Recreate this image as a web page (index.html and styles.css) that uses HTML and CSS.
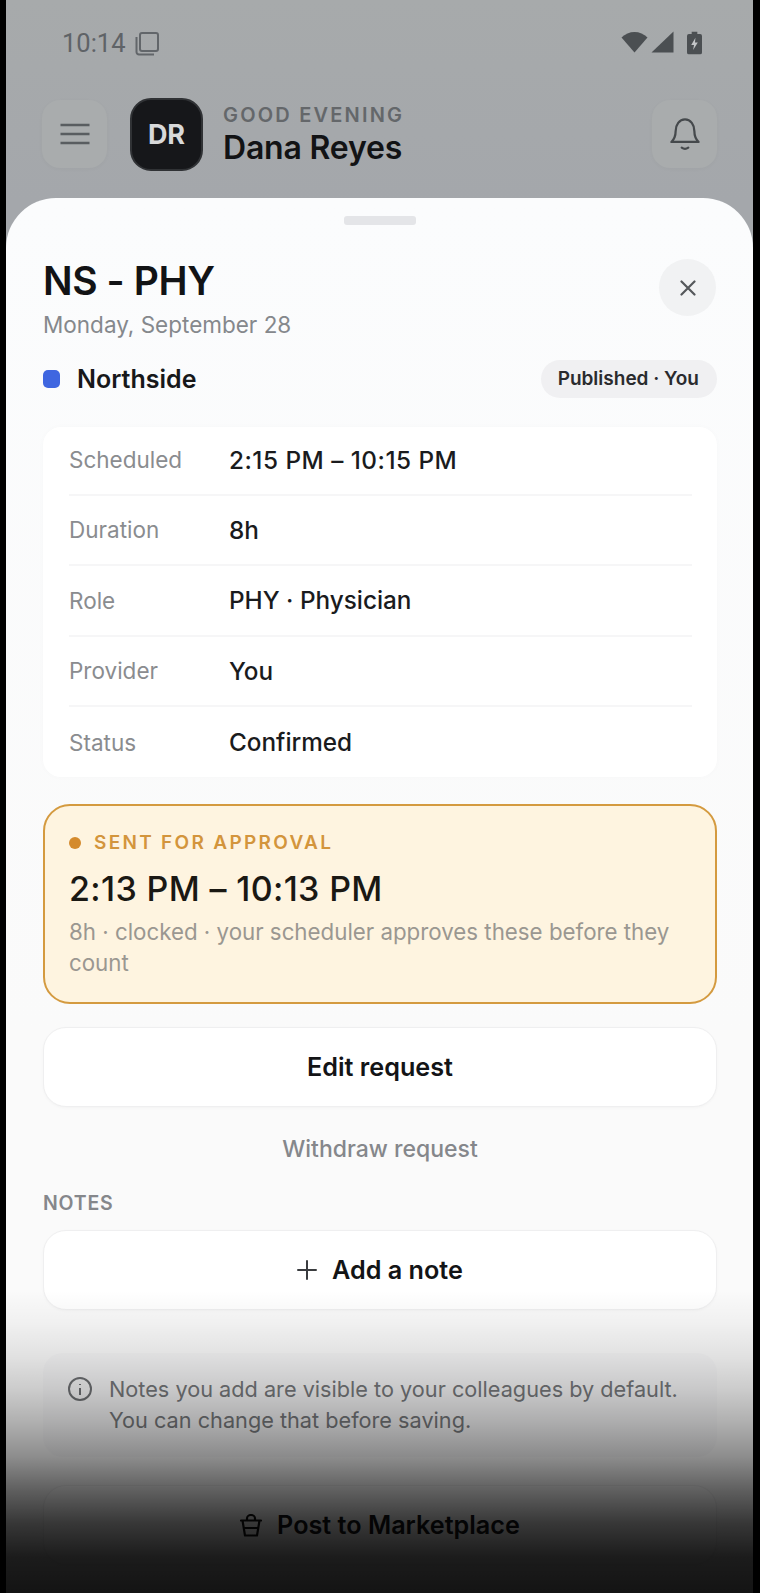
FILE: index.html
```html
<!DOCTYPE html>
<html lang="en">
<head>
    <meta charset="UTF-8">
    <meta name="viewport" content="width=device-width, initial-scale=1.0">
    <title>Shift details</title>
    <link rel="stylesheet" href="styles.css">
</head>
<body>
<div class="phone">

    <div class="status-bar">
        <div class="status-left">
            <span class="clock">10:14</span>
            <svg width="25" height="25" viewBox="0 0 25 25" fill="none" stroke="#62666a" stroke-width="2">
                <rect x="6" y="2" width="18" height="18" rx="2"/>
                <path d="M2.5 6v15a2.5 2.5 0 0 0 2.5 2.5h15"/>
            </svg>
        </div>
        <div class="status-right">
            <svg width="27" height="22" viewBox="0 0 27 22"><path d="M0.5 6.5C7.5 -1 19.500 -1 26.500 6.500L13.500 21.500Z" fill="#4b4f52"/></svg>
            <svg width="23" height="22" viewBox="0 0 23 22"><path d="M22.500 0.500V21.500H0.500Z" fill="#4b4f52"/></svg>
            <svg class="battery" width="15" height="24" viewBox="0 0 16 24">
                <path d="M5 0h6v2.500h3a2 2 0 0 1 2 2V22a2 2 0 0 1-2 2H2a2 2 0 0 1-2-2V4.500a2 2 0 0 1 2-2h3Z" fill="#4b4f52"/>
                <path d="M9 6.500 4.500 14H7.500L6.500 19.500 11.500 11.500H8.500Z" fill="#c3c5c7"/>
            </svg>
        </div>
    </div>

    <header class="top-bar">
        <div class="icon-btn">
            <svg width="30" height="22" viewBox="0 0 30 22" stroke="#595d60" stroke-width="2.400" fill="none">
                <path d="M0.500 2h29M0.500 11h29M0.500 20h29"/>
            </svg>
        </div>
        <div class="avatar">DR</div>
        <div class="greeting">
            <div class="greeting-label">GOOD EVENING</div>
            <div class="greeting-name">Dana Reyes</div>
        </div>
        <div class="icon-btn bell-btn">
            <svg width="30" height="36" viewBox="0 0 32 36" fill="none" stroke="#45494c" stroke-width="2.400" stroke-linecap="round" stroke-linejoin="round">
                <path d="M1.500 26.500h29c-3-3-4.500-6-4.500-11.500 0-7-4-12.500-10-12.500S6 8 6 15c0 5.500-1.500 8.500-4.500 11.500Z"/>
                <path d="M12.500 32.500c2 1.500 5 1.500 7 0"/>
            </svg>
        </div>
    </header>

    <main class="sheet">
        <div class="handle"></div>

        <div class="title-row">
            <div>
                <h1>NS - PHY</h1>
                <div class="date">Monday, September 28</div>
            </div>
            <div class="close-btn">
                <svg width="16" height="16" viewBox="0 0 16 16" stroke="#55585b" stroke-width="2.200" stroke-linecap="round">
                    <path d="M1.500 1.500l13 13M14.500 1.500l-13 13"/>
                </svg>
            </div>
        </div>

        <div class="site-row">
            <span class="site-dot"></span>
            <span class="site-name">Northside</span>
            <span class="pill">Published · You</span>
        </div>

        <div class="info-card">
            <div class="info-row"><span class="info-label">Scheduled</span><span class="info-value time">2:15 PM – 10:15 PM</span></div>
            <div class="info-row"><span class="info-label">Duration</span><span class="info-value">8h</span></div>
            <div class="info-row"><span class="info-label">Role</span><span class="info-value">PHY · Physician</span></div>
            <div class="info-row"><span class="info-label">Provider</span><span class="info-value">You</span></div>
            <div class="info-row"><span class="info-label">Status</span><span class="info-value">Confirmed</span></div>
        </div>

        <div class="approval">
            <div class="approval-head"><span class="approval-dot"></span>SENT FOR APPROVAL</div>
            <div class="approval-time">2:13 PM – 10:13 PM</div>
            <div class="approval-text">8h · clocked · your scheduler approves these before they count</div>
        </div>

        <div class="btn">Edit request</div>
        <div class="link-btn">Withdraw request</div>

        <div class="section-label">NOTES</div>
        <div class="btn">
            <svg width="20" height="20" viewBox="0 0 20 20" stroke="#3a3c3f" stroke-width="2" stroke-linecap="round">
                <path d="M10 1v18M1 10h18"/>
            </svg>
            Add a note
        </div>

        <div class="notice">
            <svg width="26" height="26" viewBox="0 0 26 26" fill="none" stroke="#6f7174" stroke-width="2">
                <circle cx="13" cy="13" r="11"/>
                <path d="M13 8v1M13 12v7"/>
            </svg>
            <p>Notes you add are visible to your colleagues by default. You can change that before saving.</p>
        </div>

        <div class="btn btn-post">
            <svg width="22" height="23" viewBox="0 0 22 23" fill="none" stroke="#111" stroke-width="2.200" stroke-linejoin="round" stroke-linecap="round">
                <path d="M7 6V4.500a4 3.500 0 0 1 8 0V6"/>
                <path d="M1 6.500h20M2.500 6.500 5 21.500h12l2.500-15M3.800 14h14.400"/>
            </svg>
            Post to Marketplace
        </div>
    </main>

    <div class="bottom-fade"></div>
</div>
</body>
</html>
```

FILE: styles.css
```css
* {
    box-sizing: border-box;
}
html, body {
    margin: 0;
    background-color: #000;
}
body {
    width: 760px;
    height: 1593px;
    overflow: hidden;
    font-family: "Inter", "Liberation Sans", sans-serif;
    color: #17181a;
}
.phone {
    position: relative;
    width: 747px;
    height: 1593px;
    margin-left: 6px;
    overflow: hidden;
    background: linear-gradient(180deg, #a7aaab 0%, #a4a7ab 200px);
}

/* status bar */
.status-bar {
    height: 88px;
    padding: 31px 51px 0 56px;
    display: flex;
    justify-content: space-between;
    align-items: flex-start;
}
.status-left {
    display: flex;
    align-items: center;
    gap: 8px;
}
.clock {
    font-family: "Roboto", sans-serif;
    font-size: 25.500px;
    line-height: 25px;
    color: #5f6367;
}
.status-right {
    display: flex;
    align-items: flex-start;
    gap: 3px;
}
.battery {
    margin-left: 10px;
}

/* header */
.top-bar {
    height: 110px;
    padding: 10px 36px 0 36px;
    display: flex;
    align-items: flex-start;
}
.icon-btn {
    width: 65px;
    height: 68px;
    margin-top: 2px;
    border-radius: 18px;
    background-color: #a9acad;
    box-shadow: 0 1px 4px rgba(0, 0, 0, 0.03);
    display: flex;
    align-items: center;
    justify-content: center;
}
.bell-btn {
    margin-left: auto;
}
.avatar {
    width: 73px;
    height: 73px;
    margin-left: 23px;
    border-radius: 21px;
    background-color: #16171a;
    border: 2px solid #303235;
    color: #d8d9da;
    font-size: 27px;
    font-weight: 700;
    display: flex;
    align-items: center;
    justify-content: center;
}
.greeting {
    margin-left: 20px;
    padding-top: 5px;
}
.greeting-label {
    font-size: 20px;
    line-height: 24px;
    font-weight: 600;
    letter-spacing: 2.200px;
    color: #64676a;
}
.greeting-name {
    margin-top: 3px;
    font-size: 32px;
    line-height: 36px;
    font-weight: 600;
    letter-spacing: -0.200px;
    color: #121315;
}

/* sheet */
.sheet {
    height: 1395px;
    padding: 18px 36px 0 37px;
    border-radius: 50px 50px 0 0;
    background: linear-gradient(180deg, #fbfcfd 0%, #fafafa 60%);
}
.handle {
    width: 72px;
    height: 9px;
    margin: 0 auto;
    border-radius: 3px;
    background-color: #e4e5e8;
}
.title-row {
    height: 87px;
    margin-top: 33px;
    display: flex;
    justify-content: space-between;
    align-items: flex-start;
}
h1 {
    margin: 0;
    font-size: 39px;
    line-height: 46px;
    font-weight: 600;
    letter-spacing: -0.400px;
    color: #121315;
}
.date {
    margin-top: 7px;
    font-size: 22.500px;
    line-height: 28px;
    color: #85888c;
}
.close-btn {
    width: 57px;
    height: 57px;
    margin-top: 1px;
    margin-right: 1px;
    border-radius: 50%;
    background-color: #f1f2f3;
    display: flex;
    align-items: center;
    justify-content: center;
}
.site-row {
    height: 38px;
    margin-top: 15px;
    display: flex;
    align-items: center;
}
.site-dot {
    width: 17px;
    height: 18px;
    margin-right: 17px;
    border-radius: 5px;
    background-color: #3f66e0;
}
.site-name {
    font-size: 25px;
    font-weight: 600;
    color: #17181a;
}
.pill {
    margin-left: auto;
    height: 38px;
    padding: 0 18px 0 17px;
    border-radius: 19px;
    background-color: #f0f0f2;
    font-size: 19px;
    line-height: 38px;
    font-weight: 600;
    color: #2a2b2e;
}

/* details card */
.info-card {
    margin-top: 29px;
    padding: 0 25px 0 26px;
    height: 350px;
    border-radius: 18px;
    background-color: #fff;
    box-shadow: 0 0 6px rgba(0, 0, 0, 0.02);
}
.info-row {
    height: 70.500px;
    display: flex;
    align-items: center;
    border-bottom: 2px solid #f6f6f7;
}
.info-row:first-child {
    height: 68.500px;
    padding-bottom: 1px;
}
.info-row:last-child {
    border-bottom: none;
}
.info-label {
    width: 160px;
    font-size: 22.500px;
    color: #8a8c8f;
}
.info-value {
    font-size: 24.300px;
    font-weight: 500;
    color: #1a1b1d;
}
.info-value.time {
    letter-spacing: 0.500px;
}

/* approval card */
.approval {
    height: 200px;
    margin-top: 27px;
    padding: 25px 24px 0 24px;
    border: 2px solid #d49a3f;
    border-radius: 27px;
    background-color: #fef4e0;
}
.approval-head {
    display: flex;
    align-items: center;
    font-size: 19px;
    line-height: 24px;
    font-weight: 600;
    letter-spacing: 2.300px;
    color: #d3953c;
}
.approval-dot {
    width: 12px;
    height: 12px;
    margin-right: 13px;
    border-radius: 50%;
    background-color: #d48a2c;
}
.approval-time {
    margin-top: 12px;
    font-size: 34px;
    line-height: 44px;
    font-weight: 500;
    letter-spacing: 0.350px;
    color: #1a1813;
}
.approval-text {
    margin-top: 6px;
    font-size: 22.300px;
    line-height: 30.500px;
    color: #9a9791;
}

/* buttons */
.btn {
    height: 80px;
    border: 1px solid #efeff0;
    border-radius: 23px;
    background-color: #fff;
    box-shadow: 0 1px 3px rgba(0, 0, 0, 0.03);
    display: flex;
    align-items: center;
    justify-content: center;
    gap: 15px;
    font-size: 25.200px;
    font-weight: 600;
    color: #131416;
}
.approval + .btn {
    margin-top: 23px;
}
.link-btn {
    margin-top: 27px;
    text-align: center;
    font-size: 23px;
    line-height: 30px;
    font-weight: 500;
    color: #85878b;
}
.section-label {
    margin-top: 27px;
    margin-bottom: 15px;
    font-size: 19.500px;
    line-height: 24px;
    font-weight: 600;
    letter-spacing: 0.800px;
    color: #85878b;
}
.notice {
    height: 104px;
    margin-top: 43px;
    padding: 21px 24px 0 24px;
    display: flex;
    gap: 16px;
    border-radius: 20px;
    background-color: #f6f6f7;
}
.notice svg {
    flex: none;
    margin-top: 2px;
}
.notice p {
    margin: 0;
    font-size: 21.700px;
    line-height: 31px;
    color: #77797c;
}
.btn-post {
    margin-top: 28px;
    background-color: #fcfcfc;
}

/* dark fade at the foot of the screen */
.bottom-fade {
    position: absolute;
    left: 0;
    right: 0;
    top: 1290px;
    height: 303px;
    pointer-events: none;
    background: linear-gradient(180deg,
        rgba(0, 0, 0, 0) 0,
        rgba(0, 0, 0, 0.04) 33px,
        rgba(0, 0, 0, 0.10) 67px,
        rgba(0, 0, 0, 0.19) 100px,
        rgba(0, 0, 0, 0.30) 133px,
        rgba(0, 0, 0, 0.44) 167px,
        rgba(0, 0, 0, 0.62) 200px,
        rgba(0, 0, 0, 0.78) 233px,
        rgba(0, 0, 0, 0.89) 267px,
        rgba(0, 0, 0, 0.92) 303px);
}
```
